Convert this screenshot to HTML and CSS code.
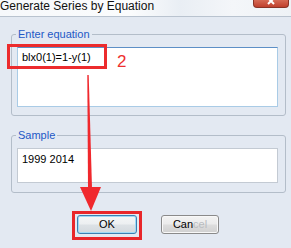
FILE: index.html
```html
<!DOCTYPE html>
<html>
<head>
<meta charset="utf-8">
<link rel="stylesheet" href="styles.css">
</head>
<body>
<div class="window">
  <div class="titlebar">
    <span class="title">Generate Series by Equation</span>
    <span class="close"><svg width="12" height="6" viewBox="0 0 12 6"><path d="M3 -2 L9 4 M9 -2 L3 4" stroke="#fff" stroke-width="2"/></svg></span>
  </div>
  <div class="content">
    <fieldset class="group">
      <legend>Enter equation</legend>
      <div class="textbox focused eq">blx0(1)=1-y(1)</div>
    </fieldset>
    <fieldset class="group second">
      <legend>Sample</legend>
      <div class="textbox sample">1999 2014</div>
    </fieldset>
    <div class="buttons">
      <div class="mark">
        <button class="btn default">OK</button>
      </div>
      <button class="btn cancel">Can<span class="dim">cel</span></button>
    </div>
  </div>
  <svg class="annot" width="291" height="248" viewBox="0 0 291 248">
    <rect x="8.5" y="45.5" width="97" height="22" fill="none" stroke="#ec2b2d" stroke-width="3"/>
    <polygon points="87.3,75 88.7,75 92,188 88,188" fill="#f0282d"/>
    <polygon points="80,187 101,187 91,211" fill="#f0282d"/>
  </svg>
  <span class="step">2</span>
</div>
</body>
</html>
```
FILE: styles.css
```css
html, body {
  margin: 0;
  padding: 0;
}
body {
  width: 291px;
  height: 248px;
  overflow: hidden;
  font-family: "Liberation Sans", Arial, sans-serif;
  font-size: 11px;
  color: #000;
}
.window {
  position: relative;
  width: 291px;
  height: 248px;
  background: #e3e9f2;
}
.titlebar {
  height: 16px;
  display: flex;
  align-items: flex-start;
  background: linear-gradient(to right, #f6f8fb 0%, #fbfcfd 45%, #e9eef4 62%, #f4f6f9 80%, #eef2f6 100%);
  border-bottom: 1px solid #b9c3cf;
}
.title {
  font-size: 12px;
  line-height: 13px;
  margin-top: 0;
  color: #111;
  white-space: nowrap;
}
.close {
  margin-left: auto;
  margin-right: 2px;
  width: 34px;
  height: 7px;
  display: flex;
  justify-content: center;
  align-items: flex-start;
  overflow: hidden;
  background: linear-gradient(#d66a55, #c0402d);
  border: 1px solid #8a3326;
  border-top: 0;
  border-radius: 0 0 4px 4px;
}
.content {
  padding: 11px 5px 0 11px;
}
.group {
  margin: 0;
  padding: 7px 7px 8px 5px;
  border: 1px solid #b3bdc9;
  border-radius: 3px;
  min-width: 0;
}
.group legend {
  padding: 0 2px;
  margin-left: -1px;
  font-size: 11px;
  line-height: 12px;
  color: #2258c6;
}
.group.second {
  margin-top: 13px;
  padding-bottom: 9px;
}
.textbox {
  background: #fff;
  border: 1px solid #c3cad3;
  padding: 2px 4px;
  line-height: 14px;
  box-sizing: border-box;
}
.textbox.focused {
  border-color: #a9cbe6;
  border-top-color: #5d8fc6;
}
.eq {
  height: 60px;
}
.sample {
  height: 35px;
  padding-top: 3px;
}
.buttons {
  display: flex;
  align-items: flex-start;
  margin-top: 18px;
  padding-left: 61px;
}
.mark {
  border: 3px solid #e8262a;
  padding: 1px 2px 3px 2px;
}
.btn {
  font-family: "Liberation Sans", Arial, sans-serif;
  font-size: 11px;
  line-height: 17px;
  height: 19px;
  padding: 0;
  color: #000;
  border-radius: 3px;
  box-sizing: border-box;
}
.btn.default {
  width: 60px;
  display: block;
  border: 1px solid #3c7fb1;
  box-shadow: inset 0 0 0 1px #9fdaf6;
  background: linear-gradient(#f4f6f7 0%, #eceff1 48%, #dde2e6 52%, #d3d9de 100%);
}
.btn.cancel {
  width: 58px;
  margin-left: 19px;
  margin-top: 4px;
  border: 1px solid #8a8a8a;
  box-shadow: inset 0 0 0 1px #f8f8f8;
  background: linear-gradient(#f3f3f3 0%, #ebebeb 48%, #dddddd 52%, #d0d0d0 100%);
}
.dim {
  color: #b9bcc0;
}
.annot {
  position: absolute;
  left: 0;
  top: 0;
  pointer-events: none;
}
.step {
  position: absolute;
  left: 117px;
  top: 53px;
  font-size: 17px;
  line-height: 17px;
  color: #ee2f2e;
}
```
